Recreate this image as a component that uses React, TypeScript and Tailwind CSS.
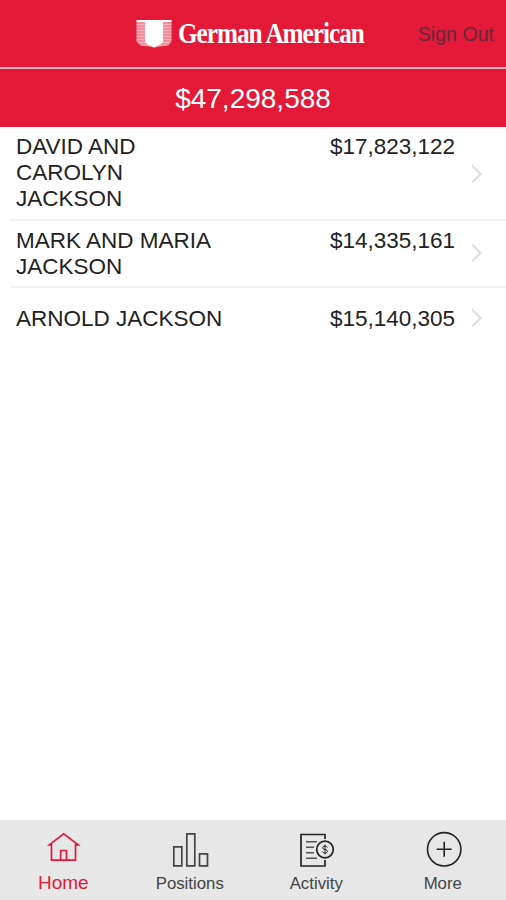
import { ReactNode } from 'react';

const households = [
  { name: 'DAVID AND CAROLYN JACKSON', value: '$17,823,122', row: 'h-[92px] pt-[7px]', width: 'w-[170px]', chevron: 'mt-[30px]' },
  { name: 'MARK AND MARIA JACKSON', value: '$14,335,161', row: 'h-[65px] pt-[7px]', width: 'w-[210px]', chevron: 'mt-[15px]' },
  { name: 'ARNOLD JACKSON', value: '$15,140,305', row: 'h-[60px] pt-[18px]', width: 'w-[230px]', chevron: 'mt-[2px]' },
];

function Shield() {
  return (
    <svg width="36" height="29" viewBox="0 0 36 29" className="shrink-0">
      <path d="M0.500 2h35v20.500l-3 4-8 1-6 1-6-1-8-1-4-4z" fill="#f28b9a" />
      <path d="M0.500 5.500h35M0.500 8.500h35M0.500 11.500h35M0.500 14.500h35M0.500 17.500h35M0.500 20.500h35M2 23.500h32M5 26h26" stroke="#f6b0ba" strokeWidth="1" />
      <path d="M0.500 1h35v2H27V22c0 3-5 4-9 6.500C14 26 9 25 9 22V3H0.500z" fill="#fff" />
    </svg>
  );
}

function Chevron({ className }: { className: string }) {
  return (
    <svg width="12" height="20" viewBox="0 0 12 20" fill="none" stroke="#dedede" strokeWidth="2" className={className}>
      <path d="M1 1.500 9.700 10 1 18.500" />
    </svg>
  );
}

function HomeIcon() {
  return (
    <svg width="40" height="40" viewBox="0 0 40 40" fill="none" stroke="#e31937" strokeWidth="1.700">
      <path d="M8.500 15.800H6.300L20.700 4.800l14.500 11h-2.700v15.400h-24z" />
      <path d="M17.700 31.200v-9.700h5.800v9.700" />
    </svg>
  );
}

function PositionsIcon() {
  return (
    <svg width="40" height="40" viewBox="0 0 40 40" fill="none" stroke="#444" strokeWidth="1.700">
      <path d="M3.800 17.800h8v19h-8zM16.800 4.800h8v32h-8zM29.500 24.800h8v12h-8z" />
    </svg>
  );
}

function ActivityIcon() {
  return (
    <svg width="40" height="40" viewBox="0 0 40 40" fill="none" stroke="#222" strokeWidth="1.700">
      <path d="M29 10V5.500H5V37h24v-6" />
      <path d="M10 12.800h11M10 18.300h8M10 23.800h8M10 29.300h11" stroke="#555" strokeWidth="1.500" />
      <circle cx="29" cy="20.500" r="8.300" />
      <path d="M31.500 18.500c-.5-1-1.300-1.400-2.500-1.400-3.200 0-3.200 3 0 3.400 3.300.3 3.300 3.500 0 3.500-1.300 0-2.200-.5-2.600-1.500M29 15.700v9.700" strokeWidth="1" />
    </svg>
  );
}

function MoreIcon() {
  return (
    <svg width="40" height="40" viewBox="0 0 40 40" fill="none" stroke="#222" strokeWidth="1.600">
      <circle cx="21.200" cy="20.300" r="16.700" />
      <path d="M21.200 12.800v15M13.700 20.300h15" />
    </svg>
  );
}

function Tab({ label, active, children }: { label: string; active?: boolean; children: ReactNode }) {
  return (
    <button className="flex flex-1 flex-col items-center pt-[9px]">
      {children}
      {active ? (
        <span className="mt-[4px] text-[19px] leading-[20px] text-[#e31937]">{label}</span>
      ) : (
        <span className="mt-[5px] text-[16.800px] leading-[20px] text-[#444]">{label}</span>
      )}
    </button>
  );
}

export default function App() {
  return (
    <div className="flex h-[900px] w-[506px] flex-col overflow-hidden bg-white font-['Liberation_Sans',Arial,sans-serif]">
      <header className="grid h-[67px] shrink-0 grid-cols-[136px_1fr_auto] items-center bg-[#e31937] pr-[12px]">
        <span />
        <div className="flex items-center">
          <Shield />
          <span className="ml-[6px] w-[186px] origin-left scale-x-[0.840] whitespace-nowrap pb-[2px] font-['Liberation_Serif',serif] text-[30px] font-bold leading-[34px] tracking-[-1.200px] text-white">
            German American
          </span>
        </div>
        <button className="pt-[2px] text-[19.600px] text-[#66293a]">Sign Out</button>
      </header>
      <div className="flex h-[60px] shrink-0 items-center justify-center border-t-2 border-[#f6b3bd] bg-[#e31937] pt-[2px] text-[28px] text-white">
        $47,298,588
      </div>

      <main className="flex-1">
        {households.map((h, i) => (
          <div key={h.name} className={i > 0 ? 'ml-[10px] border-t-2 border-[#f3f3f3] pl-[6px]' : 'pl-[16px]'}>
            <div className={`flex text-[22.500px] leading-[26px] text-[#222] ${h.row}`}>
              <div className={h.width}>{h.name}</div>
              <div className="ml-auto">{h.value}</div>
              <Chevron className={`ml-[16px] mr-[23px] shrink-0 ${h.chevron}`} />
            </div>
          </div>
        ))}
      </main>

      <nav className="flex h-[80px] shrink-0 bg-[#e7e7e7]">
        <Tab label="Home" active><HomeIcon /></Tab>
        <Tab label="Positions"><PositionsIcon /></Tab>
        <Tab label="Activity"><ActivityIcon /></Tab>
        <Tab label="More"><MoreIcon /></Tab>
      </nav>
    </div>
  );
}
